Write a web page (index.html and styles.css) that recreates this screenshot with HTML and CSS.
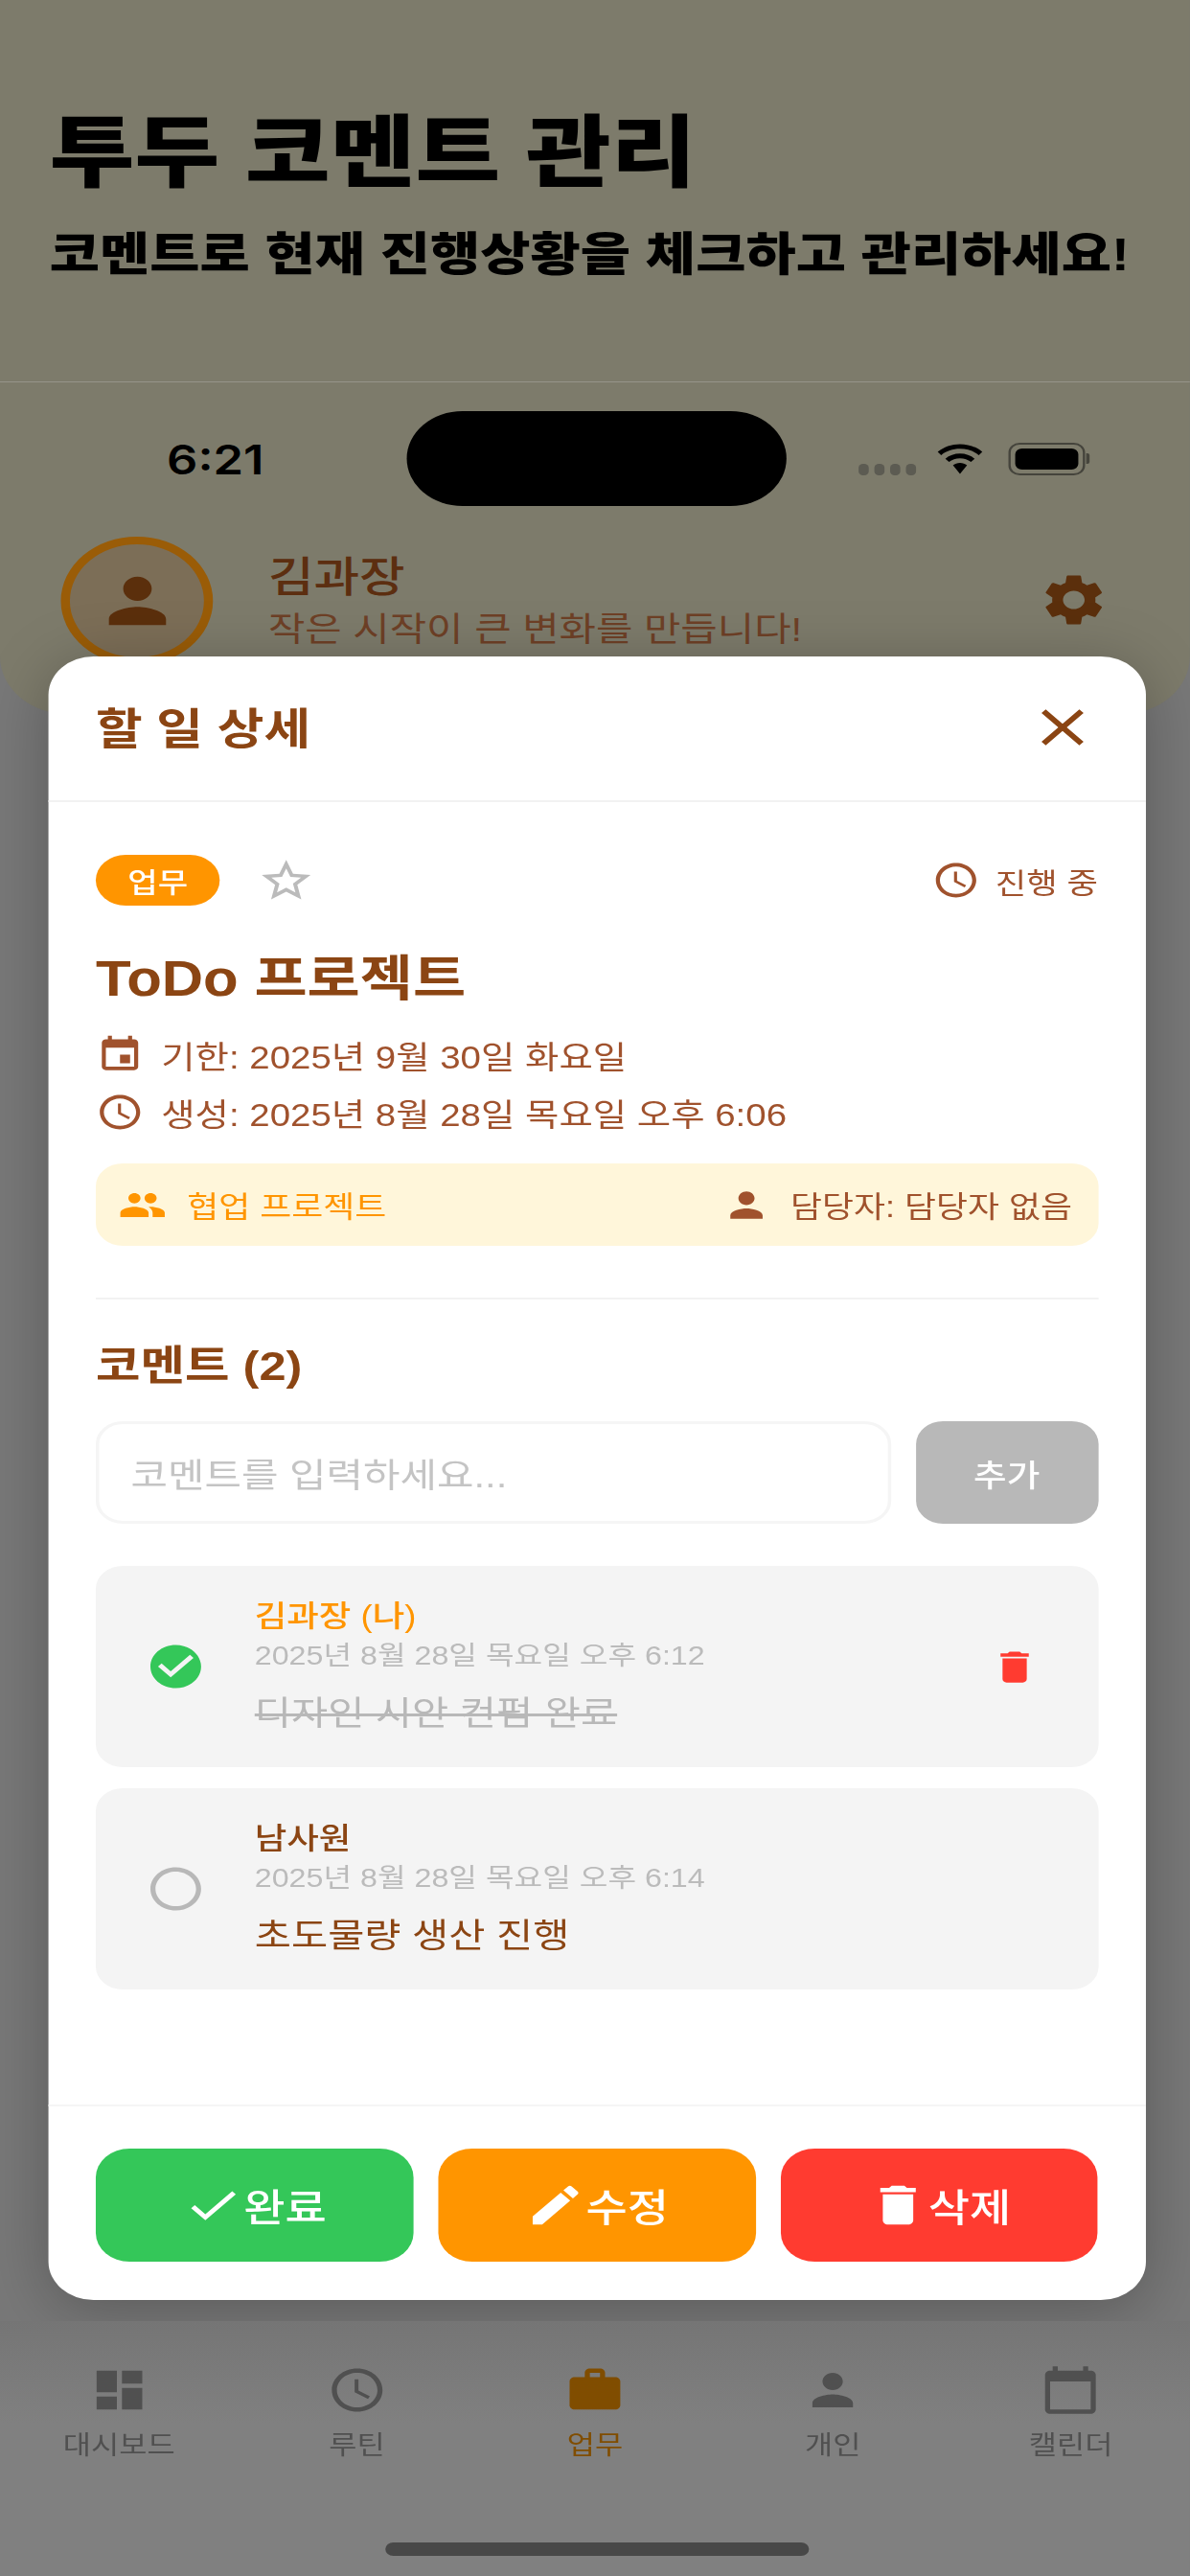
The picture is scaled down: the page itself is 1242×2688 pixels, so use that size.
FILE: index.html
```html
<!DOCTYPE html>
<html lang="ko">
<head>
<meta charset="utf-8">
<title>투두 코멘트 관리</title>
<link rel="stylesheet" href="styles.css">
</head>
<body>
<div class="page">
  <header class="promo">
    <h1 class="promo-title">투두 코멘트 관리</h1>
    <p class="promo-sub">코멘트로 현재 진행상황을 체크하고 관리하세요!</p>
  </header>

  <section class="band">
    <div class="status">
      <span class="time">6:21</span>
      <span class="island"></span>
      <span class="status-right">
        <span class="dots"><i></i><i></i><i></i><i></i></span>
        <svg class="wifi" viewBox="0 0 24 18"><path d="M12 3.2c3.5 0 6.7 1.3 9.1 3.6l1.7-1.9C19.9 2.100 16.100.5 12 .5S4.100 2.100 1.200 4.900l1.700 1.900C5.300 4.500 8.500 3.200 12 3.200zM12 8.600c2 0 3.900.8 5.300 2.100l1.800-1.900C17.200 7 14.700 5.900 12 5.900S6.800 7 4.900 8.800l1.800 1.900C8.100 9.400 10 8.600 12 8.600zM12 11.200c-1.300 0-2.500.5-3.400 1.400L12 17.500l3.400-4.900c-.9-.9-2.100-1.400-3.400-1.400z"/></svg>
        <span class="battery"><span class="battery-fill"></span></span>
        <span class="battery-cap"></span>
      </span>
    </div>
    <div class="profile">
      <span class="avatar"><svg class="ic ic-76" viewBox="0 0 24 24"><path d="M12 12c2.210 0 4-1.790 4-4s-1.790-4-4-4-4 1.790-4 4 1.790 4 4 4zm0 2c-2.670 0-8 1.340-8 4v2h16v-2c0-2.660-5.330-4-8-4z"/></svg></span>
      <div class="profile-text">
        <div class="profile-name">김과장</div>
        <div class="profile-sub">작은 시작이 큰 변화를 만듭니다!</div>
      </div>
      <svg class="ic ic-64 gear" viewBox="0 0 24 24"><path d="M19.140 12.940c.04-.3.06-.61.06-.94 0-.32-.02-.64-.07-.94l2.030-1.580c.18-.14.23-.41.12-.61l-1.920-3.320c-.12-.22-.37-.29-.59-.22l-2.390.96c-.5-.38-1.030-.7-1.620-.94l-.36-2.540c-.04-.24-.24-.41-.48-.41h-3.840c-.24 0-.43.17-.47.41l-.36 2.540c-.59.24-1.130.57-1.620.94l-2.390-.96c-.22-.08-.47 0-.59.22L2.740 8.870c-.12.21-.08.47.12.61l2.030 1.580c-.05.3-.09.63-.09.94s.02.64.07.94l-2.030 1.580c-.18.14-.23.41-.12.61l1.920 3.320c.12.22.37.29.59.22l2.390-.96c.5.38 1.030.7 1.620.94l.36 2.540c.05.24.24.41.48.41h3.840c.24 0 .44-.17.47-.41l.36-2.540c.59-.24 1.130-.56 1.620-.94l2.390.96c.22.08.47 0 .59-.22l1.920-3.320c.12-.22.07-.47-.12-.61l-2.010-1.580zM12 15.600c-1.980 0-3.600-1.620-3.600-3.600s1.620-3.600 3.600-3.600 3.600 1.620 3.600 3.600-1.620 3.600-3.600 3.600z"/></svg>
    </div>
  </section>

  <main class="backdrop"></main>

  <nav class="tabbar">
    <div class="tab"><svg class="ic ic-54" viewBox="0 0 24 24"><path d="M3 13h8V3H3v10zm0 8h8v-6H3v6zm10 0h8V11h-8v10zm0-18v6h8V3h-8z"/></svg><span>대시보드</span></div>
    <div class="tab"><svg class="ic ic-54" viewBox="0 0 24 24"><path d="M11.990 2C6.470 2 2 6.480 2 12s4.470 10 9.990 10C17.520 22 22 17.520 22 12S17.520 2 11.990 2zM12 20c-4.420 0-8-3.580-8-8s3.580-8 8-8 8 3.580 8 8-3.580 8-8 8zm.5-13H11v6l5.250 3.150.75-1.230-4.500-2.670z"/></svg><span>루틴</span></div>
    <div class="tab tab-on"><svg class="ic ic-54" viewBox="0 0 24 24"><path d="M20 6h-4V4c0-1.110-.89-2-2-2h-4c-1.110 0-2 .89-2 2v2H4c-1.110 0-1.990.89-1.990 2L2 19c0 1.110.89 2 2 2h16c1.110 0 2-.89 2-2V8c0-1.110-.89-2-2-2zm-6 0h-4V4h4v2z"/></svg><span>업무</span></div>
    <div class="tab"><svg class="ic ic-54" viewBox="0 0 24 24"><path d="M12 12c2.210 0 4-1.790 4-4s-1.790-4-4-4-4 1.790-4 4 1.790 4 4 4zm0 2c-2.670 0-8 1.340-8 4v2h16v-2c0-2.660-5.330-4-8-4z"/></svg><span>개인</span></div>
    <div class="tab"><svg class="ic ic-54" viewBox="0 0 24 24"><path d="M20 3h-1V1h-2v2H7V1H5v2H4c-1.100 0-2 .9-2 2v16c0 1.100.9 2 2 2h16c1.100 0 2-.9 2-2V5c0-1.100-.9-2-2-2zm0 18H4V8h16v13z"/></svg><span>캘린더</span></div>
    <span class="home-bar"></span>
  </nav>

  <section class="modal">
    <div class="modal-head">
      <h2 class="modal-title">할 일 상세</h2>
      <svg class="ic ic-64 brown" viewBox="0 0 24 24"><path d="M19 6.410L17.590 5 12 10.590 6.410 5 5 6.410 10.590 12 5 17.590 6.410 19 12 13.410 17.590 19 19 17.590 13.410 12z"/></svg>
    </div>
    <div class="modal-body">
      <div class="meta">
        <span class="pill">업무</span>
        <svg class="ic ic-52 star" viewBox="0 0 24 24"><path d="M22 9.240l-7.190-.62L12 2 9.190 8.630 2 9.240l5.460 4.730L5.820 21 12 17.270 18.180 21l-1.630-7.030L22 9.240zM12 15.400l-3.760 2.270 1-4.280-3.320-2.880 4.380-.38L12 6.100l1.710 4.040 4.380.38-3.320 2.880 1 4.280L12 15.400z"/></svg>
        <span class="state"><svg class="ic ic-43 sienna" viewBox="0 0 24 24"><path d="M11.990 2C6.470 2 2 6.480 2 12s4.470 10 9.990 10C17.520 22 22 17.520 22 12S17.520 2 11.990 2zM12 20c-4.420 0-8-3.580-8-8s3.580-8 8-8 8 3.580 8 8-3.580 8-8 8zm.5-13H11v6l5.250 3.150.75-1.230-4.500-2.670z"/></svg>진행 중</span>
      </div>
      <h3 class="todo-title">ToDo 프로젝트</h3>
      <div class="date-row first"><svg class="ic ic-43 sienna" viewBox="0 0 24 24"><path d="M17 12h-5v5h5v-5zM16 1v2H8V1H6v2H5c-1.110 0-1.990.9-1.990 2L3 19c0 1.100.89 2 2 2h14c1.100 0 2-.9 2-2V5c0-1.100-.9-2-2-2h-1V1h-2zm3 18H5V8h14v11z"/></svg>기한: 2025년 9월 30일 화요일</div>
      <div class="date-row"><svg class="ic ic-43 sienna" viewBox="0 0 24 24"><path d="M11.990 2C6.470 2 2 6.480 2 12s4.470 10 9.990 10C17.520 22 22 17.520 22 12S17.520 2 11.990 2zM12 20c-4.420 0-8-3.580-8-8s3.580-8 8-8 8 3.580 8 8-3.580 8-8 8zm.5-13H11v6l5.250 3.150.75-1.230-4.500-2.670z"/></svg>생성: 2025년 8월 28일 목요일 오후 6:06</div>
      <div class="collab">
        <span class="collab-left"><svg class="ic ic-43 orange" viewBox="0 0 24 24"><path d="M16 11c1.660 0 2.990-1.340 2.990-3S17.660 5 16 5c-1.660 0-3 1.340-3 3s1.340 3 3 3zm-8 0c1.660 0 2.990-1.340 2.990-3S9.660 5 8 5C6.340 5 5 6.340 5 8s1.340 3 3 3zm0 2c-2.330 0-7 1.170-7 3.500V19h14v-2.500c0-2.330-4.670-3.500-7-3.500zm8 0c-.29 0-.62.02-.97.05 1.160.84 1.970 1.970 1.970 3.450V19h6v-2.500c0-2.330-4.670-3.500-7-3.500z"/></svg>협업 프로젝트</span>
        <span class="collab-right"><svg class="ic ic-43 sienna" viewBox="0 0 24 24"><path d="M12 12c2.210 0 4-1.790 4-4s-1.790-4-4-4-4 1.790-4 4 1.790 4 4 4zm0 2c-2.670 0-8 1.340-8 4v2h16v-2c0-2.660-5.330-4-8-4z"/></svg>담당자: 담당자 없음</span>
      </div>
      <hr class="rule">
      <h3 class="comments-title">코멘트 (2)</h3>
      <div class="add-row">
        <div class="input">코멘트를 입력하세요...</div>
        <div class="add-btn">추가</div>
      </div>
      <div class="comments">
        <article class="comment">
          <svg class="ic ic-54 green" viewBox="0 0 24 24"><path d="M12 2C6.480 2 2 6.480 2 12s4.480 10 10 10 10-4.480 10-10S17.520 2 12 2zm-2 15l-5-5 1.410-1.410L10 14.170l7.590-7.590L19 8l-9 9z"/></svg>
          <div class="comment-text">
            <div class="comment-name mine">김과장 (나)</div>
            <div class="comment-date">2025년 8월 28일 목요일 오후 6:12</div>
            <div class="comment-body done">디자인 시안 컨펌 완료</div>
          </div>
          <svg class="ic ic-43 red" viewBox="0 0 24 24"><path d="M6 19c0 1.100.9 2 2 2h8c1.100 0 2-.9 2-2V7H6v12zM19 4h-3.500l-1-1h-5l-1 1H5v2h14V4z"/></svg>
        </article>
        <article class="comment">
          <svg class="ic ic-54 gray" viewBox="0 0 24 24"><path d="M12 2C6.480 2 2 6.480 2 12s4.480 10 10 10 10-4.480 10-10S17.520 2 12 2zm0 18c-4.420 0-8-3.580-8-8s3.580-8 8-8 8 3.580 8 8-3.580 8-8 8z"/></svg>
          <div class="comment-text">
            <div class="comment-name">남사원</div>
            <div class="comment-date">2025년 8월 28일 목요일 오후 6:14</div>
            <div class="comment-body">초도물량 생산 진행</div>
          </div>
        </article>
      </div>
    </div>
    <div class="modal-foot">
      <button class="act act-green"><svg class="ic ic-54" viewBox="0 0 24 24"><path d="M9 16.170L4.830 12l-1.420 1.410L9 19 21 7l-1.410-1.410z"/></svg>완료</button>
      <button class="act act-orange"><svg class="ic ic-54" viewBox="0 0 24 24"><path d="M3 17.250V21h3.750L17.810 9.940l-3.750-3.750L3 17.250zM20.710 7.040c.39-.39.39-1.020 0-1.410l-2.340-2.340c-.39-.39-1.020-.39-1.410 0l-1.830 1.830 3.750 3.750 1.830-1.830z"/></svg>수정</button>
      <button class="act act-red"><svg class="ic ic-54" viewBox="0 0 24 24"><path d="M6 19c0 1.100.9 2 2 2h8c1.100 0 2-.9 2-2V7H6v12zM19 4h-3.500l-1-1h-5l-1 1H5v2h14V4z"/></svg>삭제</button>
    </div>
  </section>
</div>
</body>
</html>
```

FILE: styles.css
```css
* { box-sizing: border-box; margin: 0; padding: 0; }
html, body { width: 1242px; height: 2688px; overflow: hidden; background: #787878; }
body { font-family: "Liberation Sans", "Noto Sans CJK KR", sans-serif; }

.page {
  position: relative;
  width: 1056px;
  height: 2688px;
  display: flex;
  flex-direction: column;
  transform: scaleX(1.176);
  transform-origin: 0 0;
}

.ic { display: block; flex: none; fill: currentColor; }
.ic-76 { width: 76px; height: 76px; }
.ic-64 { width: 64px; height: 64px; }
.ic-54 { width: 54px; height: 54px; }
.ic-52 { width: 52px; height: 52px; }
.ic-43 { width: 43px; height: 43px; }
.brown { color: #8b4513; }
.sienna { color: #a0522d; }
.orange { color: #ff9500; }
.green { color: #34c759; }
.gray { color: #b8b8b8; }
.red { color: #ff3b30; }
.star { color: #bbbbbb; }

/* promo strip */
.promo {
  height: 399px;
  padding: 110px 0 0 44px;
  background: #7d7b6b;
  border-bottom: 1px solid #96958a;
  color: #000;
}
.promo-title { font-size: 82px; line-height: 100px; font-weight: 900; white-space: nowrap; }
.promo-sub { margin-top: 25px; font-size: 48.300px; line-height: 60px; font-weight: 900; white-space: nowrap; }

/* dimmed app header */
.band {
  height: 346px;
  background: #7d7b6b;
  border-radius: 0 0 60px 60px;
}
.status { height: 142px; padding: 17px 0 0 148px; display: flex; align-items: center; }
.time { font-family: Inter, sans-serif; font-size: 43px; font-weight: 600; color: #000; width: 88px; }
.island { width: 337px; height: 99px; margin-left: 125px; background: #000; border-radius: 50px; }
.status-right { display: flex; align-items: center; margin-left: 64px; }
.dots { display: flex; gap: 5px; margin-top: 22px; }
.dots i { width: 9px; height: 12px; border-radius: 4px; background: #5c5b52; }
.wifi { display: block; width: 44px; height: 34px; margin-left: 17px; fill: #000; }
.battery {
  width: 68px; height: 34px; margin-left: 21px; padding: 4px;
  border: 2px solid #45443c; border-radius: 10px;
}
.battery-fill { display: block; height: 100%; background: #000; border-radius: 6px; }
.battery-cap { width: 3px; height: 11px; margin-left: 1px; border-radius: 0 2px 2px 0; background: #45443c; }

.profile { display: flex; align-items: center; padding: 19px 0 0 54px; }
.avatar {
  width: 135px; height: 134px; flex: none;
  display: flex; align-items: center; justify-content: center;
  border: 8px solid #9a5c07; border-radius: 50%;
  background: #7c6e57; color: #5b2f0c;
}
.profile-text { margin-left: 49px; flex: 1; margin-top: -6px; }
.profile-name { font-size: 44px; line-height: 65px; font-weight: 500; color: #5c2e10; }
.profile-sub { font-size: 35.500px; line-height: 44px; color: #6e4026; }
.gear { color: #5b2f0c; margin-right: 71px; margin-top: -2px; }

.backdrop { flex: 1; background: #787878; }

/* tab bar */
.tabbar {
  position: relative;
  z-index: 2;
  height: 266px;
  padding-top: 45px;
  display: flex;
  align-items: flex-start;
  justify-content: space-around;
  background: linear-gradient(#757575, #808080 40%);
  color: #505050;
}
.tab { width: 211px; display: flex; flex-direction: column; align-items: center; font-size: 27px; line-height: 40px; }
.tab span { margin-top: 11px; }
.tab-on { color: #804d00; }
.home-bar {
  position: absolute; left: 342px; bottom: 21px;
  width: 376px; height: 14px; border-radius: 7px; background: #484848;
}

/* modal */
.modal {
  position: absolute;
  z-index: 1;
  left: 42.5px; top: 685px;
  width: 974.5px; height: 1715px;
  display: flex; flex-direction: column;
  background: #fff;
  border-radius: 40px;
  box-shadow: 0 10px 60px rgba(0,0,0,.25);
}
.modal-head {
  height: 152px; flex: none;
  display: flex; align-items: center; justify-content: space-between;
  padding: 0 42px 0 42.5px;
  border-bottom: 2px solid #f2f2f2;
}
.modal-title { font-size: 45px; font-weight: 700; color: #8b4513; margin-top: -6px; }
.modal-head .ic { margin-top: -2px; }

.modal-body { flex: 1; padding: 55px 42.5px 0; }
.meta { height: 53px; display: flex; align-items: center; }
.pill {
  width: 110px; height: 53px;
  display: flex; align-items: center; justify-content: center;
  background: #ff9500; color: #fff;
  border-radius: 27px; font-size: 29px; font-weight: 500;
}
.star { margin-left: 33px; }
.state { margin-left: auto; display: flex; align-items: center; gap: 13px; font-size: 30px; color: #a0522d; }
.todo-title { margin-top: 47px; font-size: 51px; line-height: 60px; font-weight: 700; color: #8b4513; }
.date-row { height: 60px; display: flex; align-items: center; gap: 15px; font-size: 32.700px; color: #a0522d; }
.date-row.first { margin-top: 18px; }
.collab {
  margin-top: 24px; height: 86px; padding: 0 23px 0 20px;
  display: flex; align-items: center; justify-content: space-between;
  background: #fff6da; border-radius: 24px; font-size: 30.500px;
}
.collab-left { display: flex; align-items: center; gap: 18px; color: #ff9500; }
.collab-right { display: flex; align-items: center; gap: 18px; color: #a0522d; }
.rule { margin-top: 54px; height: 2px; border: 0; background: #f2f2f2; }
.comments-title { margin-top: 39px; font-size: 43px; line-height: 60px; font-weight: 700; color: #8b4513; }
.add-row { margin-top: 28px; display: flex; gap: 22px; }
.input {
  flex: 1; height: 107px; padding-left: 28px;
  display: flex; align-items: center;
  border: 3px solid #f5f5f5; border-radius: 24px;
  font-size: 35.600px; color: #c4c4c4;
}
.add-btn {
  width: 162px; height: 107px;
  display: flex; align-items: center; justify-content: center;
  background: #b8b8b8; color: #fff; border-radius: 24px; font-size: 32px; font-weight: 500;
}
.comments { margin-top: 44px; display: flex; flex-direction: column; gap: 22px; }
.comment {
  height: 210px; padding: 0 53px 0 44px;
  display: flex; align-items: center;
  background: #f4f4f4; border-radius: 24px;
}
.comment-text { flex: 1; margin-left: 43px; align-self: flex-start; padding-top: 33px; }
.comment-name { font-size: 31px; line-height: 40px; font-weight: 500; color: #8b4513; }
.comment-name.mine { color: #ff9500; }
.comment-date { margin-top: 1px; font-size: 27.400px; line-height: 40px; color: #bbbbbb; }
.comment-body { margin-top: 10px; font-size: 35.300px; line-height: 60px; color: #8b4513; }
.comment-body.done { color: #b8b8b8; text-decoration: line-through; }

.modal-foot {
  height: 204px; flex: none;
  padding: 44px 42.5px 0;
  display: flex; gap: 22px;
  border-top: 2px solid #f5f5f5;
}
.act {
  flex: 1; height: 118px; border: 0;
  display: flex; align-items: center; justify-content: center; gap: 0;
  border-radius: 30px; color: #fff;
  font-family: inherit; font-size: 40px; font-weight: 500;
}
.act-green { background: #34c759; }
.act-orange { background: #ff9500; }
.act-red { background: #ff3b30; }
```
